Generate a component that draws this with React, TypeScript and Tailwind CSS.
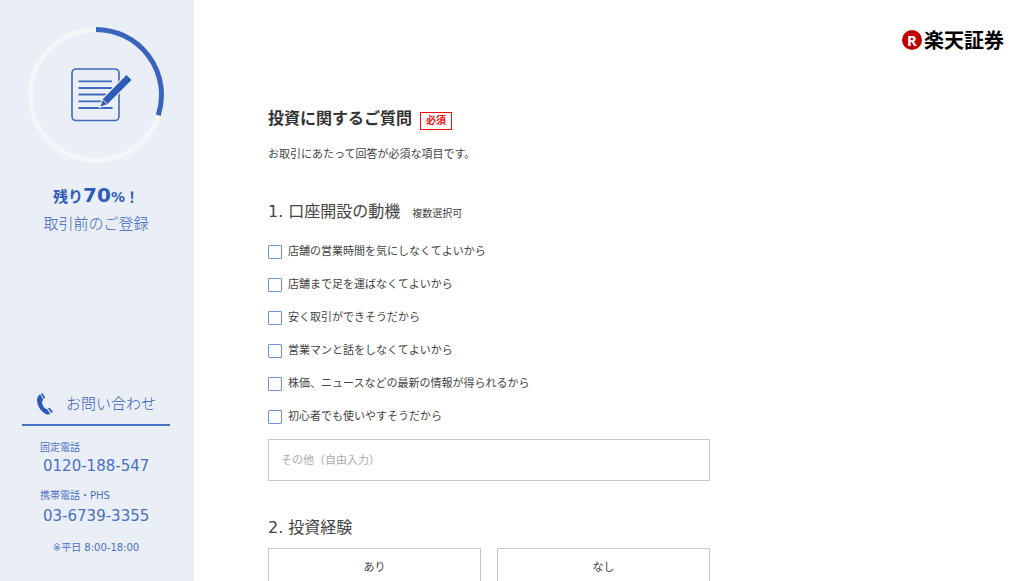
import { useState } from "react";

const REASONS = [
  "店舗の営業時間を気にしなくてよいから",
  "店舗まで足を運ばなくてよいから",
  "安く取引ができそうだから",
  "営業マンと話をしなくてよいから",
  "株価、ニュースなどの最新の情報が得られるから",
  "初心者でも使いやすそうだから",
];

export default function App() {
  return (
    <div className="flex h-screen bg-white font-['DejaVu_Sans','Noto_Sans_CJK_JP',sans-serif]">
      <Sidebar />
      <main className="flex-1 overflow-y-auto [scrollbar-width:none]">
        <header className="flex justify-end pt-7 pr-5">
          <a href="#" className="flex h-6 items-center gap-0.5">
            <span className="flex h-5 w-5 items-center justify-center rounded-full bg-[#bf0000] font-['Noto_Sans',sans-serif] text-[15px] font-bold text-white">
              R
            </span>
            <span className="font-['Noto_Sans_CJK_JP',sans-serif] text-xl leading-6 font-bold text-black">楽天証券</span>
          </a>
        </header>
        <QuestionForm />
      </main>
    </div>
  );
}

function Sidebar() {
  return (
    <aside className="flex w-[194px] shrink-0 flex-col justify-between bg-[#eaeff7] pt-[27px] pb-[25px] text-[#4a70c2]">
      <div className="flex flex-col items-center pr-0.5">
        <ProgressRing />
        <p className="mt-5 text-[15px] leading-6 font-bold text-[#2f5cba]">
          残り<span className="text-xl leading-6">70</span>
          <span className="text-sm">%！</span>
        </p>
        <p className="mt-[3px] text-[15px] leading-6 font-light text-[#3560bb]">取引前のご登録</p>
      </div>

      <div>
        <div className="mr-6 ml-[22px] flex items-center gap-3 border-b-2 border-[#4a74c9] pb-2 pl-3.5">
          <PhoneIcon />
          <h2 className="text-[15px] leading-6 font-light text-[#3560bb]">お問い合わせ</h2>
        </div>
        <dl className="mt-3 pl-10">
          <dt className="text-[10px] leading-5">固定電話</dt>
          <dd className="pl-[3px] text-[15px] leading-4">0120-188-547</dd>
          <dt className="mt-3 text-[10px] leading-5">携帯電話・PHS</dt>
          <dd className="pl-[3px] text-[15px] leading-5">03-6739-3355</dd>
        </dl>
        <p className="mt-3.5 pr-0.5 text-center text-[10px] leading-4">※平日 8:00-18:00</p>
      </div>
    </aside>
  );
}

function QuestionForm() {
  const [checked, setChecked] = useState<string[]>([]);
  const [other, setOther] = useState("");

  const toggle = (reason: string) => {
    setChecked((prev) => (prev.includes(reason) ? prev.filter((r) => r !== reason) : [...prev, reason]));
  };

  return (
    <form className="mt-[55px] ml-[74px] max-w-[442px] text-[#444]">
      <div className="flex h-6 items-center gap-2">
        <h1 className="text-base leading-6 font-bold text-[#333]">投資に関するご質問</h1>
        <span className="mt-1 border border-[#f01010] px-[5px] text-[10px] leading-4 font-bold text-[#f01010]">必須</span>
      </div>
      <p className="mt-3.5 text-[11px] leading-5">お取引にあたって回答が必須な項目です。</p>

      <div className="mt-[35px] flex items-center gap-3">
        <h2 className="text-base leading-6">1. 口座開設の動機</h2>
        <span className="mt-1 text-[10px] leading-5">複数選択可</span>
      </div>
      <ul className="mt-[18px] flex flex-col gap-[13px]">
        {REASONS.map((reason) => (
          <li key={reason} className="flex">
            <label className="flex h-5 items-center gap-1.5 text-[11px] leading-5">
              <input
                type="checkbox"
                checked={checked.includes(reason)}
                onChange={() => toggle(reason)}
                className="h-3.5 w-3.5 appearance-none rounded-[1px] border border-[#6f93d6] bg-white checked:bg-[#2f5cba]"
              />
              {reason}
            </label>
          </li>
        ))}
      </ul>
      <input
        type="text"
        aria-label="その他（自由入力）"
        value={other}
        onChange={(e) => setOther(e.target.value)}
        placeholder="その他（自由入力）"
        className="mt-3 block h-[42px] w-full border border-[#c8c8c8] px-3 text-[11px] placeholder:text-[#aaa] focus:outline-none"
      />

      <h2 className="mt-[35px] text-base leading-6">2. 投資経験</h2>
      <div className="mt-2 grid grid-cols-2 gap-4">
        <button type="button" className="h-10 border border-[#c8c8c8] text-[11px]">
          あり
        </button>
        <button type="button" className="h-10 border border-[#c8c8c8] text-[11px]">
          なし
        </button>
      </div>
    </form>
  );
}

// 登録の進捗 (30%)
function ProgressRing() {
  return (
    <svg viewBox="0 0 136 136" className="h-[136px] w-[136px]" fill="none">
      <circle cx="68" cy="68" r="65.5" stroke="#f5f6f7" strokeWidth="5" />
      <path d="M68 2.5A65.5 65.5 0 0 1 130.3 88.2" stroke="#3a65bc" strokeWidth="5" />
      <g stroke="#3f69bf">
        <rect x="44" y="42" width="47" height="51.5" rx="4" strokeWidth="1.6" />
        <path d="M50.5 54.3H84M50.5 61H84M50.5 67.5H78M50.5 74.3H73M50.5 81H84.5" strokeWidth="1.8" />
      </g>
      <path
        d="M98.5 48l5 5L79.5 77 72.5 79.500 75 72z"
        fill="#2f5cba"
        stroke="#eaeff7"
        strokeWidth="2.4"
        paintOrder="stroke"
      />
      <path d="M74.800 72.800l4.500 4.500" stroke="#eaeff7" strokeWidth="0.9" />
    </svg>
  );
}

function PhoneIcon() {
  return (
    <svg viewBox="0 0 18 22" className="h-[22px] w-[18px]" fill="#2a5abb">
      <path d="M4.2 1.3C1.300 3 .4 6.200 1.400 10c1.200 5.200 5 9.700 9 11.200 1.300.5 2.700.3 3.800-.5l-3.200-4.700c-1 .2-1.600 0-2.400-.9-1.300-1.700-2.200-3.500-2.500-5.400-.1-1.200.2-1.900 1.200-2.600z" />
      <path d="M5 .9L6.400 0 9.200 4.700 7.700 5.800zM12 15.500l1.400-1.100 3.500 4.300-1.600 1.400z" />
    </svg>
  );
}
